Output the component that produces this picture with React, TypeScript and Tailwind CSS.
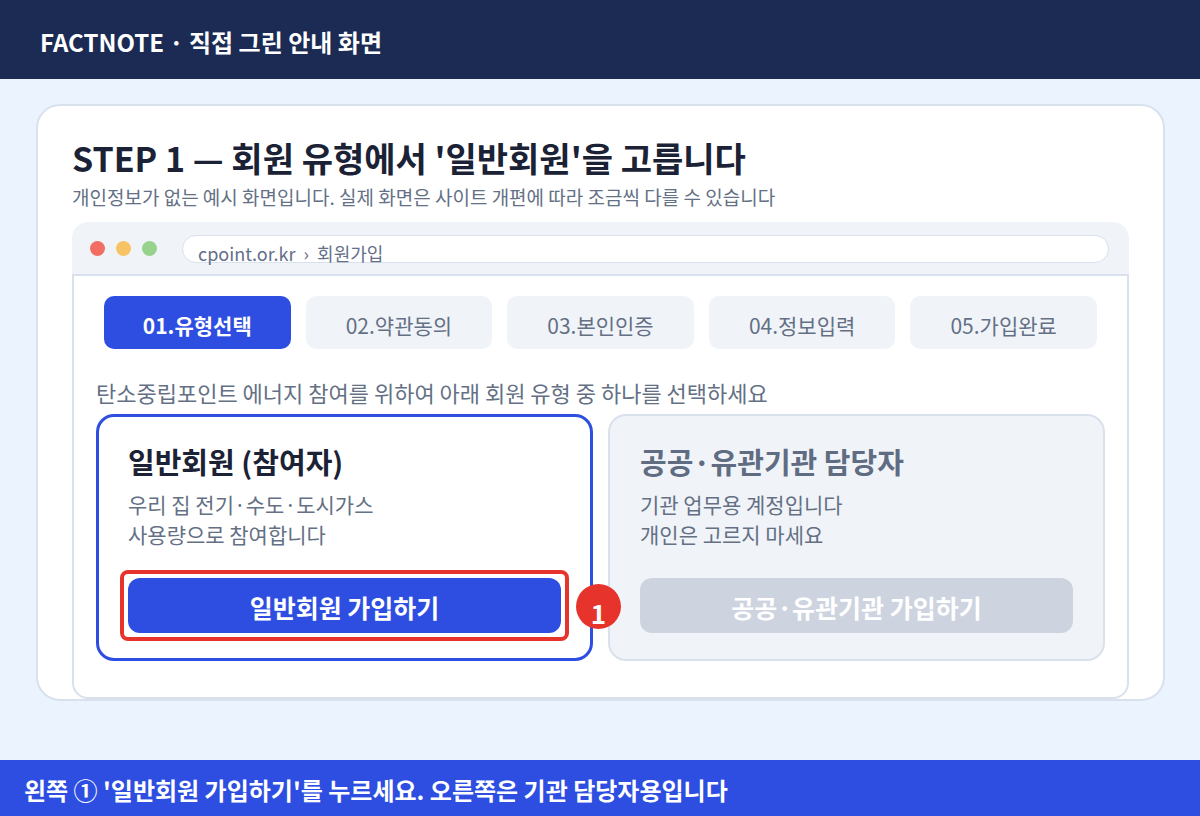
import React from 'react';
import clsx from 'clsx';

const steps = ['01.유형선택', '02.약관동의', '03.본인인증', '04.정보입력', '05.가입완료'];

const BrowserBar: React.FC = () => (
  <div className="flex h-[52px] items-start rounded-t-2xl bg-[#f0f4f9] pl-[18px] pr-5">
    <div className="mt-[19px] flex gap-[11px]">
      <span className="h-[15px] w-[15px] rounded-full bg-[#f26e64]" />
      <span className="h-[15px] w-[15px] rounded-full bg-[#f7c364]" />
      <span className="h-[15px] w-[15px] rounded-full bg-[#97d38c]" />
    </div>
    <div className="ml-[25px] mt-[13px] h-7 flex-1 whitespace-pre rounded-full border border-[#d9e1ec] bg-white pl-[15px] pt-1 text-[18px] leading-[26px] text-[#64708a]">
      {'cpoint.or.kr  ›  회원가입'}
    </div>
  </div>
);

const StepList: React.FC = () => (
  <ol className="grid grid-cols-5 gap-[15px] px-2">
    {steps.map((step, index) => (
      <li
        key={step}
        aria-current={index === 0 ? 'step' : undefined}
        className={clsx(
          'flex h-[53px] items-center justify-center rounded-[10px] pt-1 text-[21px] leading-[30px]',
          index === 0 ? 'bg-[#2d4ee0] font-bold text-white' : 'bg-[#f0f4f9] text-[#647084]'
        )}
      >
        {step}
      </li>
    ))}
  </ol>
);

interface MemberCardProps {
  title: string;
  lines: string[];
  action: string;
  selected?: boolean;
}

const MemberCard: React.FC<MemberCardProps> = ({ title, lines, action, selected }) => (
  <section
    className={clsx(
      'relative h-[247px] rounded-[18px]',
      selected ? 'border-3 border-[#2d4ee0] bg-white px-[21px] pt-6' : 'border-2 border-[#d9e1ec] bg-[#f0f4f9] px-[22px] pt-[25px]'
    )}
  >
    <h2 className={clsx('px-2 text-[29px] font-bold leading-[40px]', selected ? 'text-[#1b2235]' : 'text-[#606c82]')}>
      {title}
    </h2>
    <p className="mt-2 px-2 text-[21px] leading-[30px] text-[#647084]">
      {lines.map((line) => (
        <span key={line} className="block">
          {line}
        </span>
      ))}
    </p>
    <div
      className={clsx('mt-[21px] rounded-lg border-4 p-1', selected ? 'border-[#e6342d]' : 'border-transparent')}
    >
      <button
        type="button"
        disabled={!selected}
        className={clsx(
          'block h-[55px] w-full rounded-xl pt-0.5 text-[25px] font-bold leading-[36px] text-white',
          selected ? 'bg-[#2d4ee0]' : 'bg-[#cdd4e0]'
        )}
      >
        {action}
      </button>
    </div>
    {selected && (
      <span className="absolute -right-[31px] bottom-[29px] z-10 flex h-[45px] w-[45px] items-center justify-center rounded-full bg-[#e6342d] pt-3 text-[26px] font-bold leading-[36px] text-white">
        1
      </span>
    )}
  </section>
);

const App: React.FC = () => {
  return (
    <div className="flex min-h-screen flex-col bg-[#ebf3ff] font-['Noto_Sans_CJK_KR',sans-serif]">
      <header className="flex h-[79px] items-center bg-[#1c2b54] px-10 pt-1">
        <p className="text-2xl font-bold text-white">FACTNOTE · 직접 그린 안내 화면</p>
      </header>

      <main className="flex-1 pb-[59px] pl-9 pr-[35px] pt-[25px]">
        <div className="rounded-3xl border-2 border-[#d9e1ec] bg-white px-[34px] pt-7">
          <h1 className="text-[34px] font-bold leading-[48px] text-[#1b2235]">
            STEP 1 — 회원 유형에서 '일반회원'을 고릅니다
          </h1>
          <p className="pb-2.5 text-[19px] leading-[30px] text-[#647084]">
            개인정보가 없는 예시 화면입니다. 실제 화면은 사이트 개편에 따라 조금씩 다를 수 있습니다
          </p>

          <BrowserBar />
          <div className="rounded-b-2xl border-2 border-[#d9e1ec] bg-white px-[22px] pb-9 pt-5">
            <StepList />
            <p className="pb-[7px] pt-7 text-[22px] leading-[30px] text-[#647084]">
              탄소중립포인트 에너지 참여를 위하여 아래 회원 유형 중 하나를 선택하세요
            </p>
            <div className="grid grid-cols-2 gap-[15px]">
              <MemberCard
                selected
                title="일반회원 (참여자)"
                lines={['우리 집 전기·수도·도시가스', '사용량으로 참여합니다']}
                action="일반회원 가입하기"
              />
              <MemberCard
                title="공공·유관기관 담당자"
                lines={['기관 업무용 계정입니다', '개인은 고르지 마세요']}
                action="공공·유관기관 가입하기"
              />
            </div>
          </div>
        </div>
      </main>

      <footer className="flex h-14 items-center bg-[#2d4ee0] px-6 pt-1">
        <p className="text-2xl font-bold text-white">
          왼쪽 ① '일반회원 가입하기'를 누르세요. 오른쪽은 기관 담당자용입니다
        </p>
      </footer>
    </div>
  );
};

export default App;
